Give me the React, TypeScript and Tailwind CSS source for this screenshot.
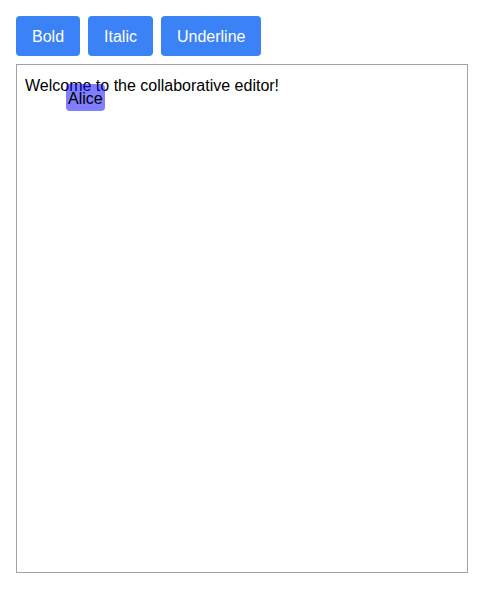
const buttons = ['Bold', 'Italic', 'Underline']

export default function App() {
  return (
    <div className="p-4 font-['Liberation_Sans',sans-serif] text-black">
      <div className="mb-2 flex gap-2">
        {buttons.map((b) => (
          <button
            key={b}
            className="rounded bg-[#3b82f6] px-4 pt-[9px] pb-[7px] text-base leading-6 text-white"
          >
            {b}
          </button>
        ))}
      </div>
      <div className="relative h-[509px] border border-[#9ca3af] px-2 pt-[9px] pb-2">
        <div className="leading-6">Welcome to the collaborative editor!</div>
        <div className="absolute left-[49px] top-[19px] rounded-sm bg-[rgba(0,0,255,0.5)] px-[2px] pt-[3px] pb-[1px] leading-[23px]">
          Alice
        </div>
      </div>
    </div>
  )
}
